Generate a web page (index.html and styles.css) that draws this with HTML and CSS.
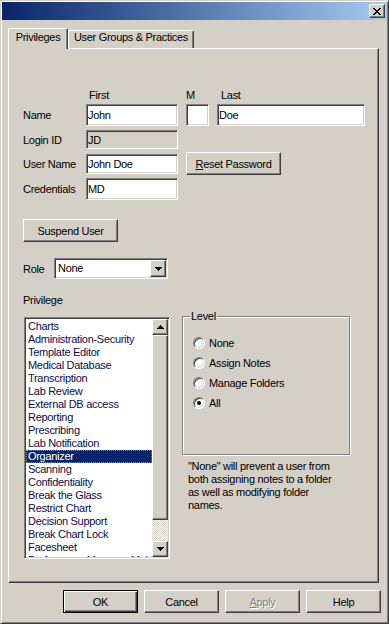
FILE: index.html
```html
<!DOCTYPE html>
<html lang="en">
<head>
  <meta charset="UTF-8">
  <meta name="viewport" content="width=device-width, initial-scale=1.0">
  <title>User Properties</title>
  <link rel="stylesheet" href="styles.css">
</head>
<body>
  <div class="window">
    <div class="titlebar">
      <button class="close-btn" aria-label="Close">
        <svg width="8" height="7" viewBox="0 0 8 7" shape-rendering="crispEdges">
          <path d="M0 0h2v1h1v1h2V1h1V0h2v1H7v1H6v1H5v1h1v1h1v1h1v1H6V6H5V5H3v1H2v1H0V6h1V5h1V4h1V3H2V2H1V1H0z" fill="#000"/>
        </svg>
      </button>
    </div>

    <div class="tabs">
      <div class="tab active">Privileges</div>
      <div class="tab">User Groups &amp; Practices</div>
    </div>

    <div class="panel">
      <div class="row head">
        <span class="label"></span>
        <span class="h-first">First</span>
        <span class="h-m">M</span>
        <span class="h-last">Last</span>
      </div>

      <div class="row name-row">
        <span class="label">Name</span>
        <input class="field w-first" type="text" value="John">
        <input class="field w-mid" type="text" value="">
        <input class="field w-last" type="text" value="Doe">
      </div>

      <div class="row login-row">
        <span class="label">Login ID</span>
        <input class="field w-first disabled" type="text" value="JD" disabled>
      </div>

      <div class="row user-row">
        <span class="label">User Name</span>
        <input class="field w-first" type="text" value="John Doe">
        <button class="btn reset-btn"><u>R</u>eset Password</button>
      </div>

      <div class="row cred-row">
        <span class="label">Credentials</span>
        <input class="field w-first" type="text" value="MD">
      </div>

      <button class="btn suspend-btn">Suspend User</button>

      <div class="row role-row">
        <span class="role-label">Role</span>
        <div class="combo">
          <span class="combo-value">None</span>
          <span class="combo-arrow">
            <svg width="7" height="4" viewBox="0 0 7 4" shape-rendering="crispEdges"><path d="M0 0h7v1H6v1H5v1H4v1H3V3H2V2H1V1H0z" fill="#000"/></svg>
          </span>
        </div>
      </div>

      <div class="section-label">Privilege</div>

      <div class="lower">
        <div class="listbox">
          <ul class="items">
            <li>Charts</li>
            <li>Administration-Security</li>
            <li>Template Editor</li>
            <li>Medical Database</li>
            <li>Transcription</li>
            <li>Lab Review</li>
            <li>External DB access</li>
            <li>Reporting</li>
            <li>Prescribing</li>
            <li>Lab Notification</li>
            <li class="selected">Organizer</li>
            <li>Scanning</li>
            <li>Confidentiality</li>
            <li>Break the Glass</li>
            <li>Restrict Chart</li>
            <li>Decision Support</li>
            <li>Break Chart Lock</li>
            <li>Facesheet</li>
            <li>Preferences Manager Maintenance</li>
          </ul>
          <div class="scrollbar">
            <span class="sb-btn">
              <svg width="7" height="4" viewBox="0 0 7 4" shape-rendering="crispEdges"><path d="M3 0h1v1h1v1h1v1h1v1H0V3h1V2h1V1h1z" fill="#000"/></svg>
            </span>
            <span class="sb-thumb"></span>
            <span class="sb-track"></span>
            <span class="sb-btn">
              <svg width="7" height="4" viewBox="0 0 7 4" shape-rendering="crispEdges"><path d="M0 0h7v1H6v1H5v1H4v1H3V3H2V2H1V1H0z" fill="#000"/></svg>
            </span>
          </div>
        </div>

        <div class="level-col">
          <div class="groupbox">
            <span class="legend">Level</span>
            <div class="radios">
              <div class="radio"><span class="radio-dot"></span>None</div>
              <div class="radio"><span class="radio-dot"></span>Assign Notes</div>
              <div class="radio"><span class="radio-dot"></span>Manage Folders</div>
              <div class="radio checked"><span class="radio-dot"></span>All</div>
            </div>
          </div>
          <p class="note">"None" will prevent a user from<br>both assigning notes to a folder<br>as well as modifying folder<br>names.</p>
        </div>
      </div>
    </div>

    <div class="actions">
      <button class="btn default">OK</button>
      <button class="btn">Cancel</button>
      <button class="btn" disabled><u>A</u>pply</button>
      <button class="btn">Help</button>
    </div>
  </div>
</body>
</html>
```

FILE: styles.css
```css
body {
  margin: 0;
  background-color: #d4d0c8;
  font-family: "Liberation Sans", Arial, sans-serif;
  font-size: 11px;
  letter-spacing: -0.3px;
  color: #000;
}
.window {
  box-sizing: border-box;
  width: 389px;
  height: 624px;
  padding: 1px;
  background-color: #d4d0c8;
  border: 1px solid;
  border-color: #d4d0c8 #404040 #404040 #d4d0c8;
  box-shadow: inset 1px 1px 0 #fff, inset -1px -1px 0 #808080;
}
.titlebar {
  height: 18px;
  display: flex;
  align-items: center;
  justify-content: flex-end;
  padding-right: 2px;
  background: linear-gradient(to right, #0a246a, #a6caf0);
}

/* raised 3d face */
.close-btn,
.btn,
.sb-btn,
.sb-thumb,
.combo-arrow {
  box-sizing: border-box;
  background-color: #d4d0c8;
  border: 1px solid;
  border-color: #fff #404040 #404040 #fff;
  box-shadow: inset -1px -1px 0 #808080;
}
.close-btn {
  width: 16px;
  height: 14px;
  padding: 0;
  display: flex;
  align-items: center;
  justify-content: center;
}
.btn {
  height: 23px;
  padding: 0;
  font: inherit;
  letter-spacing: inherit;
  color: #000;
}
.btn[disabled] {
  color: #808080;
  text-shadow: 1px 1px 0 #fff;
}
.btn.default {
  border-color: #000;
  box-shadow: inset 1px 1px 0 #fff, inset -1px -1px 0 #404040, inset -2px -2px 0 #808080;
}

/* tabs */
.tabs {
  display: flex;
  align-items: flex-end;
  height: 20px;
  margin: 8px 0 0 6px;
}
.tab {
  box-sizing: border-box;
  width: 126px;
  height: 18px;
  text-align: center;
  line-height: 13px;
  border: 1px solid;
  border-bottom: 0;
  border-color: #fff #404040 transparent #fff;
  border-radius: 2px 2px 0 0;
  box-shadow: inset -1px 0 0 #808080;
}
.tab.active {
  position: relative;
  z-index: 1;
  width: 60px;
  height: 21px;
  margin-bottom: -1px;
  padding-top: 2px;
  background-color: #d4d0c8;
}
.panel {
  box-sizing: border-box;
  width: 371px;
  height: 535px;
  margin-left: 6px;
  padding: 39px 0 0 14px;
  border: 1px solid;
  border-color: #fff #404040 #404040 #fff;
  box-shadow: inset -1px -1px 0 #808080;
}

/* form rows */
.row {
  display: flex;
  align-items: center;
}
.label {
  width: 63px;
  flex: none;
}
.head {
  height: 13px;
}
.h-first {
  box-sizing: border-box;
  width: 92px;
  padding-left: 3px;
  margin-right: 8px;
}
.h-m {
  width: 23px;
  margin-right: 8px;
}
.h-last {
  padding-left: 4px;
}
.field {
  box-sizing: border-box;
  height: 100%;
  margin: 0;
  padding: 0 0 0 1px;
  font: inherit;
  letter-spacing: inherit;
  color: #000;
  background-color: #fff;
  outline: none;
  border: 1px solid;
  border-color: #808080 #fff #fff #808080;
  box-shadow: inset 1px 1px 0 #404040, inset -1px -1px 0 #d4d0c8;
}
.field.disabled {
  background-color: #d4d0c8;
}
.w-first {
  width: 92px;
}
.w-mid {
  width: 23px;
  margin-left: 8px;
}
.w-last {
  width: 148px;
  margin-left: 8px;
}
.name-row {
  height: 22px;
  margin-top: 3px;
}
.login-row {
  height: 19px;
  margin-top: 4px;
}
.user-row {
  height: 23px;
  margin-top: 3px;
}
.user-row .field {
  height: 20px;
}
.reset-btn {
  width: 95px;
  margin-left: 8px;
}
.cred-row {
  height: 22px;
  margin-top: 3px;
}
.suspend-btn {
  display: block;
  width: 95px;
  margin-top: 19px;
}
.role-row {
  height: 21px;
  margin-top: 16px;
}
.role-label {
  width: 31px;
}
.combo {
  box-sizing: border-box;
  display: flex;
  width: 114px;
  height: 21px;
  padding: 1px;
  background-color: #fff;
  border: 1px solid;
  border-color: #808080 #fff #fff #808080;
  box-shadow: inset 1px 1px 0 #404040, inset -1px -1px 0 #d4d0c8;
}
.combo-value {
  flex: 1;
  padding-left: 2px;
  line-height: 17px;
}
.combo-arrow {
  width: 16px;
  display: flex;
  align-items: center;
  justify-content: center;
}
.section-label {
  margin-top: 15px;
  line-height: 13px;
}

/* list + level */
.lower {
  display: flex;
  align-items: flex-start;
  margin-top: 9px;
}
.listbox {
  box-sizing: border-box;
  display: flex;
  width: 146px;
  height: 242px;
  margin: 1px 0 0 1px;
  padding: 1px;
  background-color: #fff;
  border: 1px solid;
  border-color: #808080 #fff #fff #808080;
  box-shadow: inset 1px 1px 0 #404040, inset -1px -1px 0 #d4d0c8;
}
.items {
  flex: 1;
  min-width: 0;
  margin: 0;
  padding: 1px 0 0;
  list-style: none;
  overflow: hidden;
  color: #0c0c48;
}
.items li {
  height: 13px;
  line-height: 13px;
  padding-left: 2px;
  white-space: nowrap;
  overflow: hidden;
}
.items li.selected {
  background-color: #0a246a;
  color: #fff;
  outline: 1px dotted #8c8c6c;
  outline-offset: -1px;
}
.scrollbar {
  display: flex;
  flex-direction: column;
  flex: none;
  width: 16px;
}
.sb-btn {
  height: 16px;
  display: flex;
  align-items: center;
  justify-content: center;
}
.sb-thumb {
  height: 185px;
}
.sb-track {
  flex: 1;
  background: repeating-conic-gradient(#fff 0 25%, #d4d0c8 0 50%) 0 0 / 2px 2px;
}
.level-col {
  width: 168px;
  margin-left: 12px;
}
.groupbox {
  box-sizing: border-box;
  height: 139px;
  border: 1px solid #808080;
  box-shadow: inset 1px 1px 0 #fff, 1px 1px 0 #fff;
}
.legend {
  display: block;
  width: fit-content;
  margin: -7px 0 0 7px;
  padding: 0 1px;
  line-height: 13px;
  background-color: #d4d0c8;
}
.radios {
  padding: 10px 0 0 10px;
}
.radio {
  display: flex;
  align-items: center;
  height: 20px;
}
.radio-dot {
  box-sizing: border-box;
  width: 12px;
  height: 12px;
  margin-right: 4px;
  display: flex;
  align-items: center;
  justify-content: center;
  border-radius: 50%;
  background-color: #fff;
  border: 1px solid;
  border-color: #808080 #fff #fff #808080;
  box-shadow: inset 1px 1px 0 #404040, inset -1px -1px 0 #d4d0c8;
}
.radio.checked .radio-dot::after {
  content: "";
  width: 4px;
  height: 4px;
  border-radius: 50%;
  background-color: #000;
}
.note {
  margin: 5px 0 0;
  padding-left: 6px;
  line-height: 13px;
}

/* dialog buttons */
.actions {
  display: flex;
  justify-content: flex-end;
  gap: 6px;
  margin-top: 7px;
  padding-right: 6px;
}
.actions .btn {
  width: 75px;
}
```
